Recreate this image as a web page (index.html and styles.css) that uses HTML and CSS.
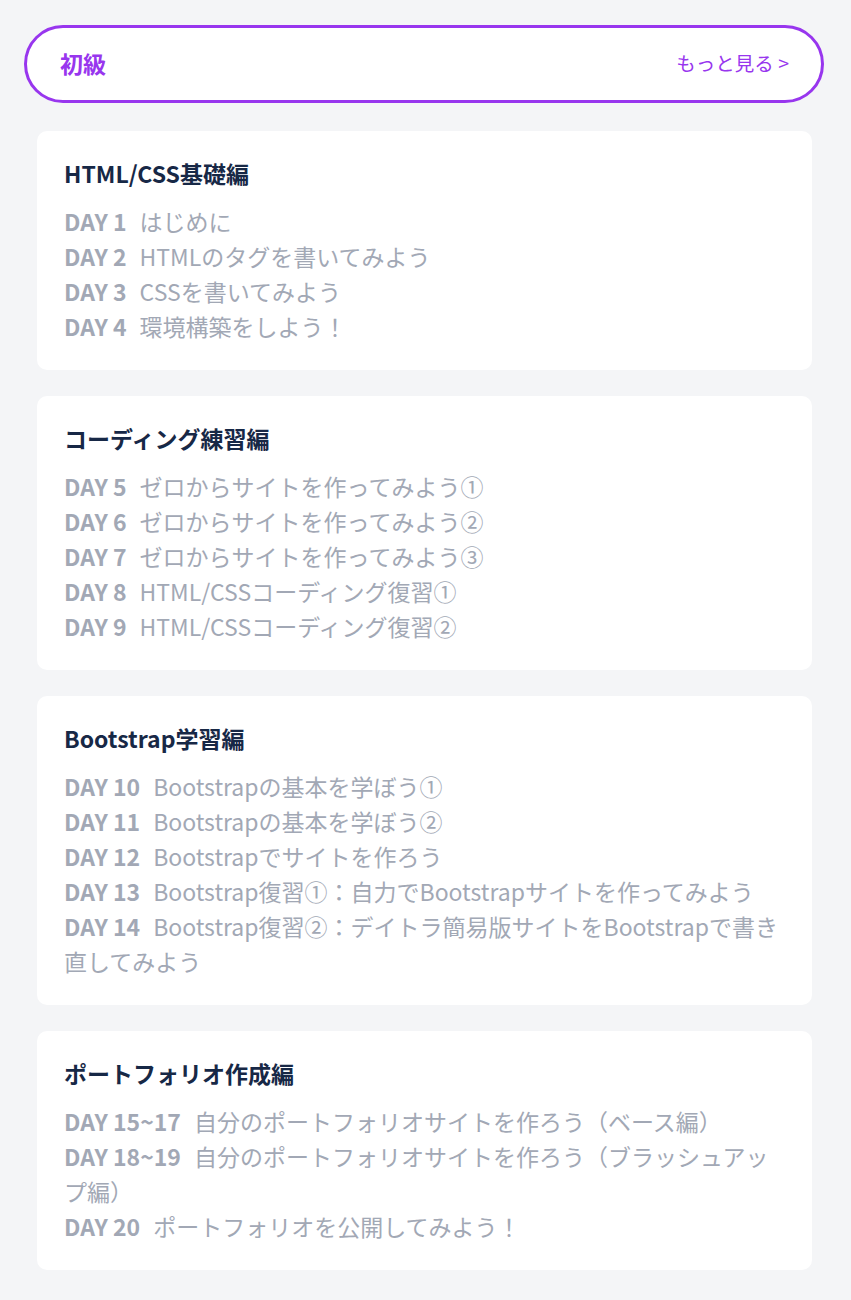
FILE: index.html
```html
<!DOCTYPE html>
<html lang="ja">
<head>
    <meta charset="UTF-8">
    <meta name="viewport" content="width=device-width, initial-scale=1.0">
    <title>初級カリキュラム</title>
    <link rel="stylesheet" href="styles.css">
</head>
<body>
    <div class="page">
        <div class="level-bar">
            <span class="level-name">初級</span>
            <a class="more-link" href="#">もっと見る &gt;</a>
        </div>

        <div class="course-list">
            <div class="course-card">
                <h2>HTML/CSS基礎編</h2>
                <ul>
                    <li><span class="day">DAY 1</span>はじめに</li>
                    <li><span class="day">DAY 2</span>HTMLのタグを書いてみよう</li>
                    <li><span class="day">DAY 3</span>CSSを書いてみよう</li>
                    <li><span class="day">DAY 4</span>環境構築をしよう！</li>
                </ul>
            </div>

            <div class="course-card">
                <h2>コーディング練習編</h2>
                <ul>
                    <li><span class="day">DAY 5</span>ゼロからサイトを作ってみよう①</li>
                    <li><span class="day">DAY 6</span>ゼロからサイトを作ってみよう②</li>
                    <li><span class="day">DAY 7</span>ゼロからサイトを作ってみよう③</li>
                    <li><span class="day">DAY 8</span>HTML/CSSコーディング復習①</li>
                    <li><span class="day">DAY 9</span>HTML/CSSコーディング復習②</li>
                </ul>
            </div>

            <div class="course-card">
                <h2>Bootstrap学習編</h2>
                <ul>
                    <li><span class="day">DAY 10</span>Bootstrapの基本を学ぼう①</li>
                    <li><span class="day">DAY 11</span>Bootstrapの基本を学ぼう②</li>
                    <li><span class="day">DAY 12</span>Bootstrapでサイトを作ろう</li>
                    <li><span class="day">DAY 13</span>Bootstrap復習①：自力でBootstrapサイトを作ってみよう</li>
                    <li><span class="day">DAY 14</span>Bootstrap復習②：デイトラ簡易版サイトをBootstrapで書き直してみよう</li>
                </ul>
            </div>

            <div class="course-card">
                <h2>ポートフォリオ作成編</h2>
                <ul>
                    <li><span class="day">DAY 15~17</span>自分のポートフォリオサイトを作ろう（ベース編）</li>
                    <li><span class="day">DAY 18~19</span>自分のポートフォリオサイトを作ろう（ブラッシュアップ編）</li>
                    <li><span class="day">DAY 20</span>ポートフォリオを公開してみよう！</li>
                </ul>
            </div>
        </div>
    </div>
</body>
</html>
```

FILE: styles.css
```css
body {
    margin: 0;
    background-color: #f4f5f7;
    font-family: "Noto Sans CJK JP", "Noto Sans", sans-serif;
}
.page {
    padding: 25px 27px 30px 24px;
}
.level-bar {
    display: flex;
    justify-content: space-between;
    align-items: center;
    height: 78px;
    box-sizing: border-box;
    padding: 0 32px 3px 33px;
    border: 3px solid #9836ee;
    border-radius: 40px;
    background-color: #fff;
}
.level-name {
    color: #9836ee;
    font-size: 23px;
    font-weight: bold;
}
.more-link {
    color: #9836ee;
    font-size: 19.5px;
    text-decoration: none;
}
.course-list {
    display: flex;
    flex-direction: column;
    gap: 26px;
    margin: 28px 12px 0 13px;
}
.course-card {
    background-color: #fff;
    border-radius: 10px;
    padding: 25px 27px 26px;
}
.course-card h2 {
    margin: 0 0 13px;
    font-size: 23px;
    line-height: 35px;
    color: #172846;
}
.course-card ul {
    list-style: none;
    margin: 0;
    padding: 0;
}
.course-card li {
    font-size: 23px;
    line-height: 35px;
    color: #a2a8b5;
}
.day {
    font-weight: bold;
    margin-right: 13px;
}
```
